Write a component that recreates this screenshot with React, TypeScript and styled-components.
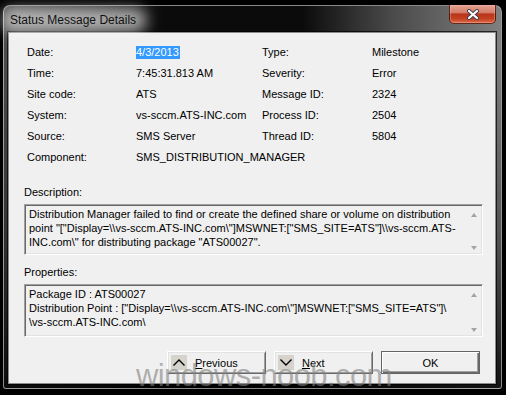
import React from 'react'
import styled, { createGlobalStyle } from 'styled-components'

type Field = { label: string; value: string; selected?: boolean }

const leftFields: Field[] = [
  { label: 'Date:', value: '4/3/2013', selected: true },
  { label: 'Time:', value: '7:45:31.813 AM' },
  { label: 'Site code:', value: 'ATS' },
  { label: 'System:', value: 'vs-sccm.ATS-INC.com' },
  { label: 'Source:', value: 'SMS Server' },
  { label: 'Component:', value: 'SMS_DISTRIBUTION_MANAGER' },
]

const rightFields: Field[] = [
  { label: 'Type:', value: 'Milestone' },
  { label: 'Severity:', value: 'Error' },
  { label: 'Message ID:', value: '2324' },
  { label: 'Process ID:', value: '2504' },
  { label: 'Thread ID:', value: '5804' },
]

const descriptionLines = [
  'Distribution Manager failed to find or create the defined share or volume on distribution',
  'point "["Display=\\\\vs-sccm.ATS-INC.com\\"]MSWNET:["SMS_SITE=ATS"]\\\\vs-sccm.ATS-',
  'INC.com\\" for distributing package "ATS00027".',
]

const propertyLines = [
  'Package ID : ATS00027',
  'Distribution Point : ["Display=\\\\vs-sccm.ATS-INC.com\\"]MSWNET:["SMS_SITE=ATS"]\\',
  '\\vs-sccm.ATS-INC.com\\',
]

function FieldList({ fields, labelWidth, width }: { fields: Field[]; labelWidth: number; width: number }) {
  return (
    <FieldGroup $labelWidth={labelWidth} $width={width}>
      {fields.map((f) => (
        <React.Fragment key={f.label}>
          <FieldLabel>{f.label}</FieldLabel>
          <FieldValue>{f.selected ? <Highlight>{f.value}</Highlight> : f.value}</FieldValue>
        </React.Fragment>
      ))}
    </FieldGroup>
  )
}

function ReadOnlyBox({ lines, height }: { lines: string[]; height: number }) {
  return (
    <TextBox $height={height}>
      <TextLines>
        {lines.map((line, i) => (
          <Line key={i}>{line}</Line>
        ))}
      </TextLines>
      <ScrollColumn>
        <ScrollArrow $dir="up" />
        <ScrollArrow $dir="down" />
      </ScrollColumn>
    </TextBox>
  )
}

function Chevron({ dir }: { dir: 'up' | 'down' }) {
  return (
    <ArrowIcon>
      <svg width="16" height="15" viewBox="0 0 16 15">
        <path
          d={dir === 'up' ? 'M2.5 10.5 L8 5 L13.5 10.5' : 'M2.5 4.5 L8 10 L13.5 4.5'}
          fill="none"
          stroke="#000"
          strokeWidth="1.4"
        />
      </svg>
    </ArrowIcon>
  )
}

export default function App(): JSX.Element {
  return (
    <>
      <GlobalStyle />
      <Page>
        <Window>
          <TitleBar>
            <Title>Status Message Details</Title>
            <CloseButton>
              <svg width="14" height="11" viewBox="0 0 14 11">
                <path d="M3 2 L11 9 M11 2 L3 9" stroke="#3b3b4a" strokeWidth="4" strokeLinecap="round" />
                <path d="M3 2 L11 9 M11 2 L3 9" stroke="#fff" strokeWidth="2.2" strokeLinecap="round" />
              </svg>
            </CloseButton>
          </TitleBar>
          <Client>
            <InfoArea>
              <FieldList fields={leftFields} labelWidth={109} width={235} />
              <FieldList fields={rightFields} labelWidth={110} width={200} />
            </InfoArea>

            <Section $top={17}>
              <SectionLabel>Description:</SectionLabel>
              <ReadOnlyBox lines={descriptionLines} height={51} />
            </Section>

            <Section $top={10}>
              <SectionLabel>Properties:</SectionLabel>
              <ReadOnlyBox lines={propertyLines} height={53} />
            </Section>

            <ButtonRow>
              <DialogButton>
                <Chevron dir="up" />
                <ButtonText>
                  <u>P</u>revious
                </ButtonText>
              </DialogButton>
              <DialogButton>
                <Chevron dir="down" />
                <ButtonText>
                  <u>N</u>ext
                </ButtonText>
              </DialogButton>
              <DialogButton $default>OK</DialogButton>
            </ButtonRow>
          </Client>
        </Window>
        <Watermark>windows-noob.com</Watermark>
      </Page>
    </>
  )
}

const GlobalStyle = createGlobalStyle`
  html, body {
    margin: 0;
    padding: 0;
    background: #000;
    overflow: hidden;
  }
  body {
    font-family: "Liberation Sans", Arial, sans-serif;
    font-size: 11px;
    color: #000;
  }
`

const Page = styled.div`
  position: relative;
  width: 506px;
  height: 395px;
  overflow: hidden;
  padding: 5px 0 0 3px;
  box-sizing: border-box;
`

const Window = styled.div`
  width: 499px;
  height: 384px;
  box-sizing: border-box;
  display: flex;
  flex-direction: column;
  border: 1px solid rgba(180, 180, 180, 0.75);
  border-radius: 7px 7px 3px 3px;
  background:
    linear-gradient(to bottom, rgba(0, 0, 0, 0) 0px, rgba(0, 0, 0, 0) 40px, rgba(0, 0, 0, 0.35) 60%, rgba(0, 0, 0, 0.85) 100%),
    linear-gradient(to right, #4e4e4e 0%, #333 18%, #0b0b0b 32%, #0b0b0b 60%, #4a4a4a 78%, #808080 100%);
`

const TitleBar = styled.div`
  height: 26px;
  flex: none;
  display: flex;
  align-items: flex-start;
  justify-content: space-between;
  padding: 0 5px 0 6px;
`

const Title = styled.div`
  position: relative;
  align-self: center;
  margin-top: 1px;
  font-size: 12px;
  color: #111;
  white-space: nowrap;
  z-index: 0;

  &::before {
    content: '';
    position: absolute;
    inset: -5px -10px -5px -8px;
    background: rgba(255, 255, 255, 0.6);
    border-radius: 10px;
    filter: blur(7px);
    z-index: -1;
  }
`

const CloseButton = styled.div`
  width: 47px;
  height: 19px;
  margin-top: -1px;
  box-sizing: border-box;
  display: flex;
  align-items: center;
  justify-content: center;
  border: 1px solid rgba(70, 20, 10, 0.85);
  border-top: none;
  border-radius: 0 0 5px 5px;
  box-shadow: inset 0 0 0 1px rgba(255, 200, 180, 0.35);
  background: linear-gradient(to bottom, #e4a393 0%, #d47d68 42%, #b9351d 50%, #c2401f 75%, #e06a4b 100%);
`

const Client = styled.div`
  flex: 1;
  margin: 0 5px 4px 4px;
  background: #f0f0f0;
  border: 1px solid #8c8c8c;
  box-shadow: 0 0 0 1px rgba(0, 0, 0, 0.7);
  display: flex;
  flex-direction: column;
`

const InfoArea = styled.div`
  display: flex;
  padding: 9px 0 0 18px;
`

const FieldGroup = styled.div<{ $labelWidth: number; $width: number }>`
  width: ${(p) => p.$width}px;
  display: grid;
  grid-template-columns: ${(p) => p.$labelWidth}px 1fr;
  grid-auto-rows: 21px;
  line-height: 21px;
`

const FieldLabel = styled.div`
  white-space: nowrap;
`

const FieldValue = styled.div`
  white-space: nowrap;
`

const Highlight = styled.span`
  display: inline-block;
  line-height: 13px;
  padding: 0 1px 0 0;
  background: #3399ff;
  color: #fff;
`

const Section = styled.div<{ $top: number }>`
  margin-top: ${(p) => p.$top}px;
  padding: 0 12px 0 15px;
`

const SectionLabel = styled.div`
  line-height: 14px;
  margin-bottom: 5px;
`

const TextBox = styled.div<{ $height: number }>`
  height: ${(p) => p.$height}px;
  box-sizing: border-box;
  display: flex;
  border: 1px solid;
  border-color: #a0a0a0 #fff #fff #a0a0a0;
  box-shadow: inset 1px 1px #696969, inset -1px -1px #e3e3e3;
  background: #f0f0f0;
`

const TextLines = styled.div`
  flex: 1;
  padding: 2px 0 0 4px;
  line-height: 14px;
`

const Line = styled.div`
  white-space: nowrap;
`

const ScrollColumn = styled.div`
  width: 14px;
  margin-right: 1px;
  display: flex;
  flex-direction: column;
  justify-content: space-between;
  align-items: center;
  padding: 8px 0 4px;
`

const ScrollArrow = styled.div<{ $dir: 'up' | 'down' }>`
  width: 0;
  height: 0;
  border-left: 3.5px solid transparent;
  border-right: 3.5px solid transparent;
  ${(p) => (p.$dir === 'up' ? 'border-bottom: 4px solid #a3a3a3;' : 'border-top: 4px solid #a3a3a3;')}
`

const ButtonRow = styled.div`
  display: flex;
  justify-content: flex-end;
  gap: 8px;
  padding: 14px 15px 0 0;
`

const DialogButton = styled.div<{ $default?: boolean }>`
  width: 99px;
  height: 23px;
  box-sizing: border-box;
  display: flex;
  align-items: center;
  justify-content: ${(p) => (p.$default ? 'center' : 'flex-start')};
  padding-left: ${(p) => (p.$default ? 0 : 3)}px;
  background: #f0f0f0;
  border: 1px solid;
  border-color: ${(p) => (p.$default ? '#646464' : '#fff #696969 #696969 #fff')};
  box-shadow: ${(p) =>
    p.$default
      ? 'inset 1px 1px #fff, inset -1px -1px #696969, inset -2px -2px #a0a0a0'
      : 'inset 1px 1px #e3e3e3, inset -1px -1px #a0a0a0'};
`

const ArrowIcon = styled.span`
  width: 16px;
  height: 15px;
  display: flex;
  background: #d6d3cd;
`

const ButtonText = styled.span`
  margin-left: 8px;
`

const Watermark = styled.div`
  position: absolute;
  left: 136px;
  top: 366px;
  font-family: "Liberation Sans", Arial, sans-serif;
  font-size: 31px;
  line-height: 20px;
  letter-spacing: -0.6px;
  color: rgba(130, 130, 130, 0.6);
  white-space: nowrap;
  pointer-events: none;
`
